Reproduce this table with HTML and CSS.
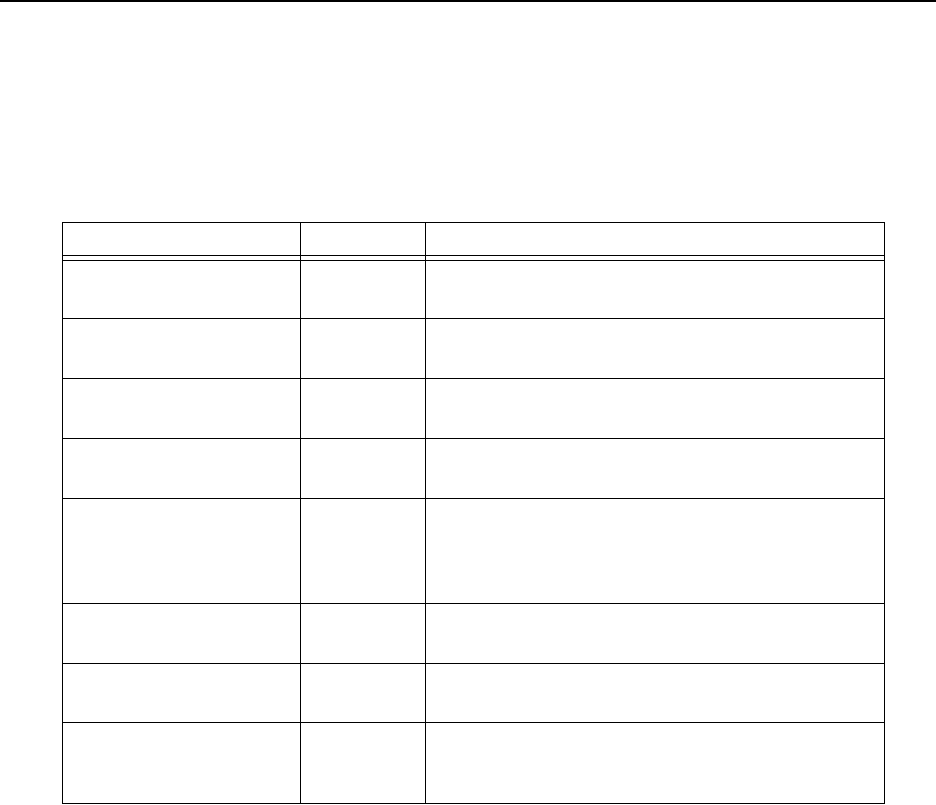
FILE: index.html
```html
<!DOCTYPE html>
<html lang="en">
<head>
<meta charset="utf-8">
<title>Table</title>
<link rel="stylesheet" href="styles.css">
</head>
<body>
<div class="page">
  <div class="top-rule"></div>
  <div class="content">
    <div class="table">
      <div class="cell head"></div><div class="cell head"></div><div class="cell head last"></div>
      <div class="cell gap"></div><div class="cell gap"></div><div class="cell gap last"></div>
      <div class="cell r58"></div><div class="cell r58"></div><div class="cell r58 last"></div>
      <div class="cell r60"></div><div class="cell r60"></div><div class="cell r60 last"></div>
      <div class="cell r60"></div><div class="cell r60"></div><div class="cell r60 last"></div>
      <div class="cell r60"></div><div class="cell r60"></div><div class="cell r60 last"></div>
      <div class="cell r105"></div><div class="cell r105"></div><div class="cell r105 last"></div>
      <div class="cell r60"></div><div class="cell r60"></div><div class="cell r60 last"></div>
      <div class="cell r59"></div><div class="cell r59"></div><div class="cell r59 last"></div>
      <div class="cell r80 final"></div><div class="cell r80 final"></div><div class="cell r80 final last"></div>
    </div>
  </div>
</div>
</body>
</html>
```

FILE: styles.css
```css
* { box-sizing: border-box; }
html, body {
  margin: 0;
  padding: 0;
  background: #fff;
  font-family: "Liberation Sans", Arial, sans-serif;
}
.page {
  width: 936px;
  display: flex;
  flex-direction: column;
}
.top-rule {
  height: 2px;
  background: #000;
}
.content {
  padding: 220px 0 0 62px;
}
.table {
  display: grid;
  grid-template-columns: 238px 125px 458px;
  width: 823px;
  box-sizing: content-box;
  width: 821px;
  border: 1px solid #000;
}
.cell {
  border-right: 1px solid #000;
  border-bottom: 1px solid #000;
}
.cell.last { border-right: none; }
.cell.final { border-bottom: none; }
.head { height: 33px; }
.gap { height: 5px; }
.r58 { height: 58px; }
.r59 { height: 59px; }
.r60 { height: 60px; }
.r105 { height: 105px; }
.r80 { height: 80px; }
```
